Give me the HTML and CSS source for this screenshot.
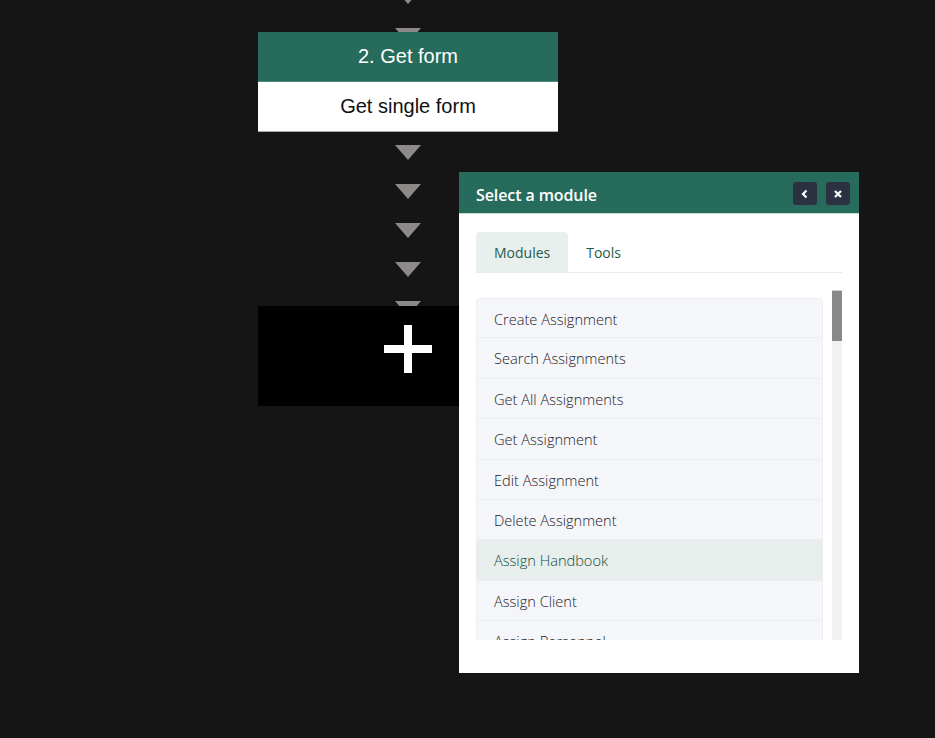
FILE: index.html
```html
<!DOCTYPE html>
<html>
<head>
<meta charset="utf-8">
<link rel="stylesheet" href="styles.css">
</head>
<body>
<div class="canvas">
  <div class="connector">
    <span class="tri"></span><span class="tri"></span><span class="tri"></span><span class="tri"></span>
    <span class="tri"></span><span class="tri"></span><span class="tri"></span><span class="tri"></span>
    <span class="tri"></span>
  </div>
  <div class="node">
    <div class="node-head">2. Get form</div>
    <div class="node-body">Get single form</div>
  </div>
  <div class="add-node"><span class="plus"></span></div>

  <div class="panel">
    <div class="panel-head">
      <span class="panel-title">Select a module</span>
      <div class="panel-btns">
        <button class="pbtn"><svg width="10" height="10" viewBox="0 0 10 10"><path d="M6.5 1.5 L3 5 L6.5 8.5" fill="none" stroke="#fff" stroke-width="2.2"/></svg></button>
        <button class="pbtn"><svg width="10" height="10" viewBox="0 0 10 10"><path d="M2 2 L8 8 M8 2 L2 8" fill="none" stroke="#fff" stroke-width="2.2"/></svg></button>
      </div>
    </div>
    <div class="panel-body">
      <div class="tabs">
        <div class="tab active">Modules</div>
        <div class="tab">Tools</div>
      </div>
      <div class="scroll">
        <div class="list">
          <div class="item">Create Assignment</div>
          <div class="item">Search Assignments</div>
          <div class="item">Get All Assignments</div>
          <div class="item">Get Assignment</div>
          <div class="item">Edit Assignment</div>
          <div class="item">Delete Assignment</div>
          <div class="item active">Assign Handbook</div>
          <div class="item">Assign Client</div>
          <div class="item">Assign Personnel</div>
          <div class="item">Unassign Personnel</div>
        </div>
        <div class="sbar"><div class="sthumb"></div></div>
      </div>
    </div>
  </div>
</div>
</body>
</html>
```
FILE: styles.css
```css
html, body {
  margin: 0;
  padding: 0;
  background: #151515;
}
.canvas {
  position: relative;
  width: 935px;
  height: 738px;
  overflow: hidden;
  background: #151515;
}
.connector {
  position: absolute;
  left: 395px;
  top: -11px;
  display: flex;
  flex-direction: column;
  gap: 24px;
}
.tri {
  display: block;
  width: 0;
  height: 0;
  border-left: 13px solid transparent;
  border-right: 13px solid transparent;
  border-top: 15px solid #8e8989;
}
.node {
  position: absolute;
  left: 258px;
  top: 32px;
  width: 300px;
  font-family: "Liberation Sans", Arial, sans-serif;
  font-size: 20px;
  text-align: center;
}
.node-head {
  height: 49px;
  line-height: 48px;
  background: #276b5c;
  color: #fff;
  border-bottom: 1px solid #4f8b7c;
}
.node-body {
  height: 49px;
  line-height: 48px;
  background: #fff;
  color: #111;
  border-bottom: 1px solid #a8a8a8;
}
.add-node {
  position: absolute;
  left: 258px;
  top: 306px;
  width: 300px;
  height: 100px;
  background: #000;
  display: flex;
  align-items: center;
  justify-content: center;
}
.plus {
  position: relative;
  width: 48px;
  height: 48px;
  margin-bottom: 14px;
}
.plus::before, .plus::after {
  content: "";
  position: absolute;
  background: #fff;
}
.plus::before { left: 0; top: 20px; width: 48px; height: 8px; }
.plus::after { left: 20px; top: 0; width: 8px; height: 48px; }

.panel {
  position: absolute;
  left: 459px;
  top: 172px;
  width: 400px;
  height: 501px;
  background: #fff;
  font-family: "Open Sans", sans-serif;
  display: flex;
  flex-direction: column;
}
.panel-head {
  height: 42px;
  background: #276b5c;
  border-bottom: 1px solid #c6d8d3;
  display: flex;
  align-items: center;
  justify-content: space-between;
  padding: 4px 9px 0 17px;
  box-sizing: border-box;
}
.panel-title {
  color: #fff;
  font-weight: 600;
  font-size: 16px;
  letter-spacing: -0.1px;
}
.panel-btns {
  display: flex;
  gap: 9px;
  margin-top: -2px;
}
.pbtn {
  width: 24px;
  height: 23px;
  border: 0;
  border-radius: 3px;
  background: #2c3141;
  padding: 0;
  display: flex;
  align-items: center;
  justify-content: center;
}
.panel-body {
  padding: 18px 17px 0 17px;
}
.tabs {
  display: flex;
  border-bottom: 1px solid #e5ebe9;
}
.tab {
  height: 40px;
  line-height: 41px;
  padding: 0 18px;
  font-size: 14px;
  color: #1e5c4d;
  border-radius: 4px 4px 0 0;
}
.tab.active {
  background: #e9efed;
}
.scroll {
  margin-top: 17px;
  height: 350px;
  display: flex;
  gap: 9px;
  overflow: hidden;
}
.list {
  flex: 1;
  padding-top: 8px;
}
.item {
  box-sizing: border-box;
  height: 40.4px;
  line-height: 41px;
  padding: 0 17px;
  background: #f5f6fa;
  border: 1px solid #eceef1;
  border-top-width: 0;
  font-size: 14.6px;
  font-weight: 300;
  color: #1c2024;
}
.item:first-child {
  border-top-width: 1px;
  border-radius: 4px 4px 0 0;
}
.item.active {
  background: #e8eeeb;
  color: #0f4d3e;
}
.sbar {
  width: 10px;
  background: #f1f1f1;
}
.sthumb {
  height: 50px;
  background: #898989;
  border-top: 1px solid #d0d0d0;
}
```
